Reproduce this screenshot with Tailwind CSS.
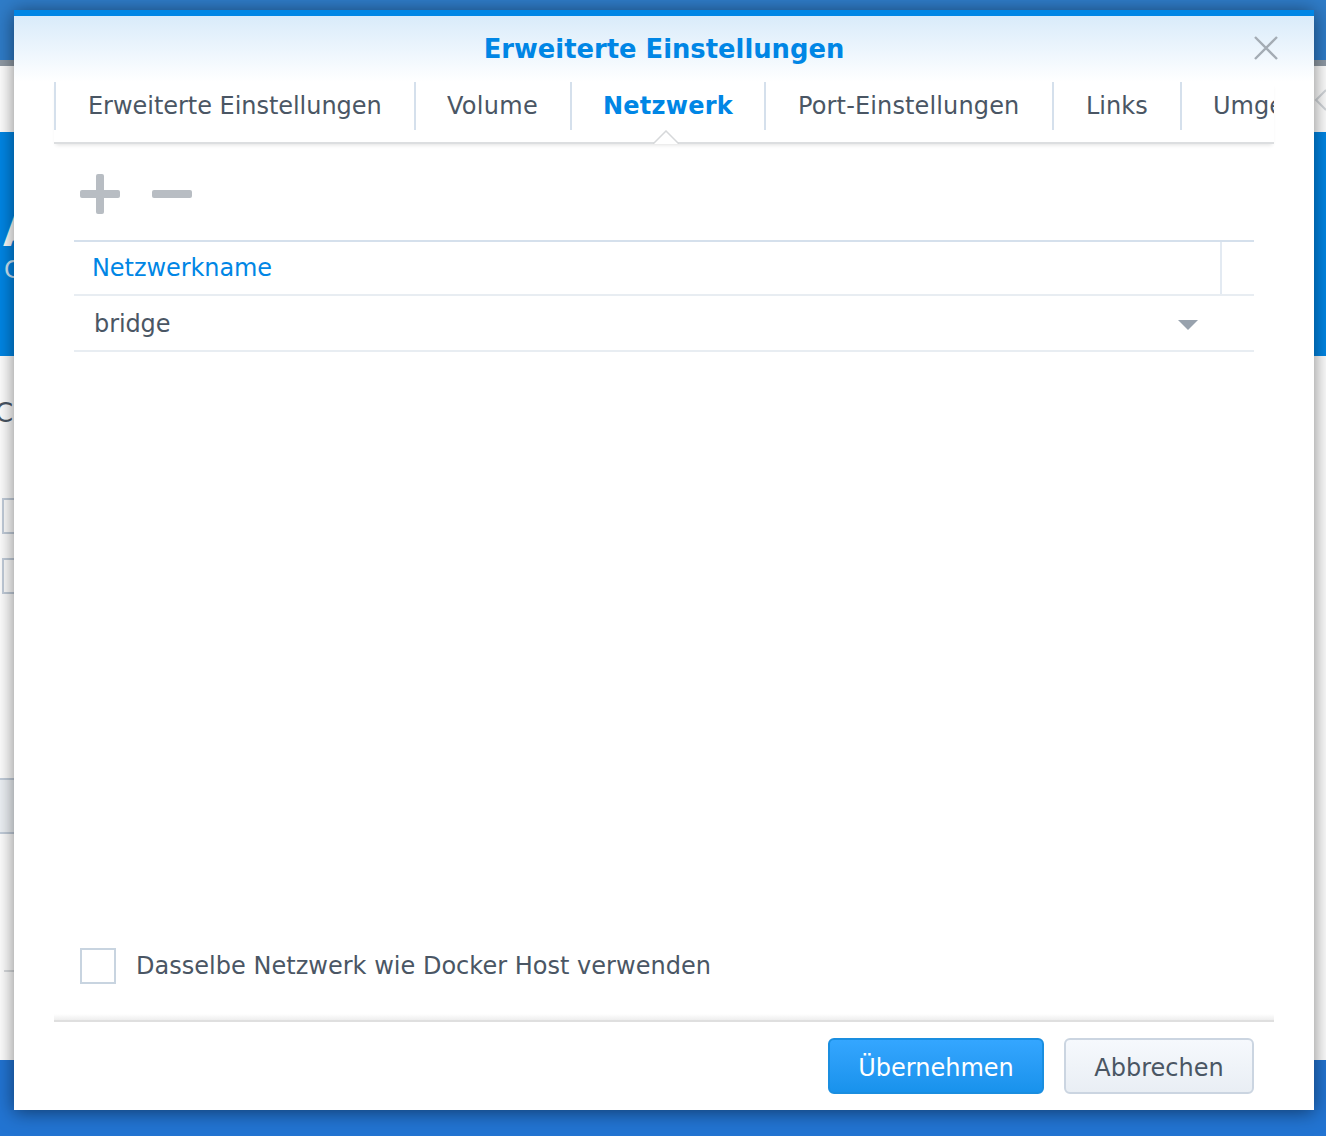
<!DOCTYPE html>
<html lang="de">
<head>
  <meta charset="UTF-8" />
  <title>Erweiterte Einstellungen</title>
  <script src="https://cdn.jsdelivr.net/npm/@tailwindcss/browser@4"></script>
</head>
<body class="relative w-[1326px] h-[1136px] overflow-hidden bg-[#2274d2] font-['DejaVu_Sans',sans-serif] text-[#4a5664]">

  <!-- Window behind the dialog -->
  <div class="flex flex-col h-[1136px]">
    <div class="h-[60px] bg-[#2f7cc8]"></div>
    <div class="h-[6px] bg-[#8f9aa5]"></div>
    <div class="h-[66px] bg-white flex justify-end items-center">
      <svg class="w-3 h-[30px] text-[#d4d8dc]" viewBox="0 0 12 30" fill="none" stroke="currentColor" stroke-width="2"><path d="M12 6 2 16l10 10" /></svg>
    </div>
    <div class="h-[224px] bg-[#0086e5] text-white overflow-hidden">
      <div class="mt-[76px] ml-[3px] text-[40px] leading-[48px] font-bold">A</div>
      <div class="ml-[4px] text-[24px] leading-[28px] text-[#cfe8fb]">C</div>
    </div>
    <div class="h-[704px] bg-white flex flex-col">
      <div class="mt-[44px] -ml-[5px] text-[26px] leading-[26px]">C</div>
      <div class="mt-[72px] ml-[2px] w-[20px] h-[36px] border-2 border-[#c3cedb]"></div>
      <div class="mt-[24px] ml-[2px] w-[20px] h-[36px] border-2 border-[#c3cedb]"></div>
      <div class="mt-[184px] h-[56px] w-[20px] bg-[#eef2f6] border-y-2 border-[#c3cedb]"></div>
      <div class="mt-[136px] ml-[4px] h-[2px] w-[20px] bg-[#d9dcdf]"></div>
    </div>
    <div class="grow bg-[#2274d2]"></div>
  </div>

  <!-- Dialog -->
  <div class="absolute left-[14px] top-[10px] w-[1300px] h-[1100px] bg-white border-t-[6px] border-[#0086e5] shadow-[0_2px_18px_rgba(0,0,0,0.5)] flex flex-col">
    <div class="absolute inset-x-0 top-0 h-[66px] bg-gradient-to-b from-[#d9ebfa] to-white"></div>

    <!-- Title -->
    <div class="relative h-[66px] flex items-center justify-center">
      <h1 class="text-[25.8px] font-bold text-[#0086e5] pt-[1px]">Erweiterte Einstellungen</h1>
      <svg class="absolute left-[1240px] top-[20px] w-6 h-6 text-[#a4acb4]" viewBox="0 0 24 24" fill="none" stroke="currentColor" stroke-width="2.4"><path d="M1 1l22 22M23 1 1 23" /></svg>
    </div>

    <!-- Tabs -->
    <div class="relative mx-10 h-[62px] border-b-2 border-[#dcdee0] shadow-[0_3px_4px_-2px_rgba(0,0,0,0.12)]">
      <div class="flex h-[48px] overflow-hidden text-[24px] leading-[48px] whitespace-nowrap">
        <div class="w-[360px] shrink-0 border-l-2 border-[#d5e0ec] pl-8 tracking-[-0.04px]">Erweiterte Einstellungen</div>
        <div class="w-[156px] shrink-0 border-l-2 border-[#d5e0ec] pl-[31px] tracking-[0.3px]">Volume</div>
        <div class="w-[194px] shrink-0 border-l-2 border-[#d5e0ec] pl-[31px] font-bold tracking-[0.25px] text-[#0086e5]">Netzwerk</div>
        <div class="w-[288px] shrink-0 border-l-2 border-[#d5e0ec] pl-8 tracking-[0.14px]">Port-Einstellungen</div>
        <div class="w-[128px] shrink-0 border-l-2 border-[#d5e0ec] pl-8">Links</div>
        <div class="w-[94px] shrink-0 border-l-2 border-[#d5e0ec] pl-[31px]">Umgebung</div>
      </div>
      <svg class="absolute left-[599px] top-[48px] w-[26px] h-[14px]" viewBox="0 0 26 14"><path d="M0 14 13 1l13 13" fill="#fff" stroke="#d6d8da" stroke-width="1.5" /></svg>
    </div>

    <!-- Toolbar -->
    <div class="mx-[66px] mt-[30px] h-[40px] flex gap-8">
      <svg class="w-10 h-10 text-[#b8bdc3]" viewBox="0 0 40 40" fill="currentColor"><rect x="0" y="16" width="40" height="8" rx="2" /><rect x="16" y="0" width="8" height="40" rx="2" /></svg>
      <svg class="w-10 h-10 text-[#b8bdc3]" viewBox="0 0 40 40" fill="currentColor"><rect x="0" y="16" width="40" height="8" rx="2" /></svg>
    </div>

    <!-- Network table -->
    <div class="mx-[60px] mt-[26px] border-t-2 border-[#d5e0ec]">
      <div class="h-[54px] border-b-2 border-[#e8edf2] flex">
        <div class="w-[1148px] pl-[18px] text-[24px] leading-[52px] tracking-[-0.08px] text-[#0086e5] border-r-2 border-[#e3eaf2]">Netzwerkname</div>
      </div>
      <div class="h-[56px] border-b-2 border-[#e8edf2] flex items-center justify-between pl-5 pr-[56px]">
        <span class="text-[24px] leading-[54px] mt-[2px] tracking-[-0.1px]">bridge</span>
        <svg class="w-5 h-[10px] mt-1 text-[#98a2ad]" viewBox="0 0 20 10" fill="currentColor"><path d="M0 0h20L10 10z" /></svg>
      </div>
    </div>

    <!-- Checkbox -->
    <label class="mx-[66px] mt-[596px] h-9 flex items-center gap-5 text-[24px] tracking-[0.02px]">
      <span class="w-9 h-9 border-2 border-[#c8d4e0] shrink-0"></span>
      Dasselbe Netzwerk wie Docker Host verwenden
    </label>

    <!-- Footer -->
    <div class="mx-10 mt-[30px] h-[8px] bg-gradient-to-b from-white to-[#eeeeee] border-b-2 border-[#dfdfdf]"></div>
    <div class="mx-10 mt-4 pr-5 flex justify-end gap-5 text-[24px]">
      <button class="w-[216px] h-[56px] pt-[3px] rounded-md border-2 border-[#1a8ee0] bg-gradient-to-b from-[#34a6ff] to-[#1892ec] text-white">Übernehmen</button>
      <button class="w-[190px] h-[56px] pt-[3px] rounded-md border-2 border-[#cbd5e1] bg-gradient-to-b from-[#f6f9fd] to-[#e9eef4]">Abbrechen</button>
    </div>
  </div>

</body>
</html>
